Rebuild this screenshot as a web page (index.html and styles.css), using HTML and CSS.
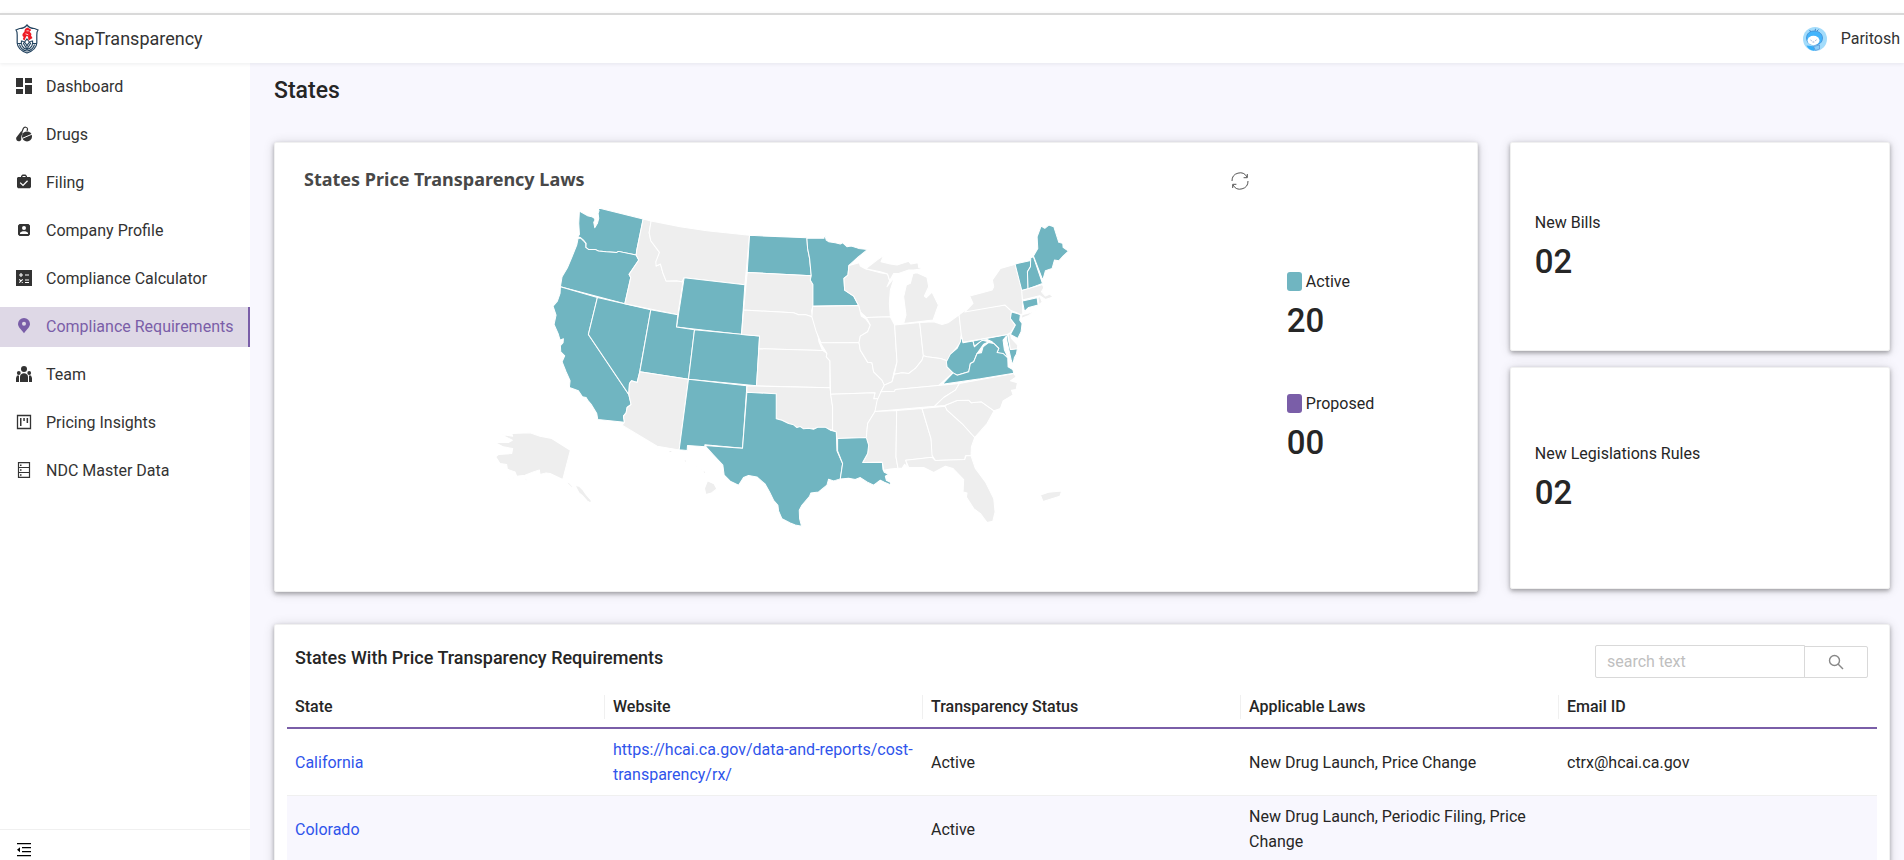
FILE: index.html
```html
<!DOCTYPE html>
<html lang="en">
<head>
<meta charset="utf-8">
<title>SnapTransparency - States</title>
<link rel="stylesheet" href="styles.css">
</head>
<body>
<div class="app">
  <header class="topbar">
    <svg class="logo" viewBox="0 0 24 30" aria-hidden="true">
      <path d="M12 1C10 3.400 7 4.600 4.500 4.500L1 6C2.500 8 2.500 9 2.200 11v8c.3 4 4 8 9.800 10 5.800-2 9.500-6 9.800-10v-8c-.3-2-.3-3 1.200-5l-3.500-1.500C17 4.600 14 3.400 12 1z" fill="#fff" stroke="#23435f" stroke-width="1.200"/>
      <path d="M2.500 19.500h4M21.500 19.500h-4M12 15l3.500 4.500L12 25l-3.500-5.500zM6.500 16.500c-1 4 1 8 5.500 9 4.500-1 6.500-5 5.500-9M4.500 20.500c1 4 4 6 7.500 6.500 3.500-.5 6.500-2.500 7.500-6.500M7 17c2 .5 4 2.500 5 5 1-2.500 3-4.500 5-5" fill="none" stroke="#23435f" stroke-width="1.100"/>
      <path d="M13 3.500c-2 .5-3.800 1.800-3.500 4L7.500 10v2l1.200 1-.9 2 1.700 1.500 1-2.500 1-2 1.500.5.500 4 2.500-1.500 1.500-1-1.500-2.500.5-1.500-2-2.500 1.500-1-.5-1.500-1.500-.5z" fill="#ee1c25"/>
      <path d="M11.500 6.800h2.300M10.500 9.800l2.800 1" stroke="#fff" stroke-width=".8"/>
    </svg>
    <span class="brand">SnapTransparency</span>
    <button class="user" type="button">
      <svg class="avatar" viewBox="0 0 24 24" aria-hidden="true">
        <circle cx="12" cy="12" r="12" fill="#a3dcfb"/>
        <path d="M3.500 18.500l9 1-1 4.200C8 24 5 22 3.500 18.500z" fill="#35aef8"/>
        <path d="M6.500 3l2 2.500M12.500 1.800l-.5 2.700M14 4l1.500-1.500" stroke="#3c7fc6" stroke-width=".9" fill="none"/>
        <path d="M11 4c5 0 8.500 3 8.500 7 0 4.500-3.500 7-8 7s-8-2.500-8-7 3.500-7 7.500-7z" fill="#43b4fb" stroke="#3c86cf" stroke-width=".7"/>
        <ellipse cx="10.500" cy="13.500" rx="6" ry="4.700" fill="#fff"/>
        <path d="M7.500 13l1.200.8M13.500 12.800l-1.200.9M9.500 15h1.800" stroke="#7b93c4" stroke-width=".8" fill="none"/>
        <path d="M10.500 19.500l6-1.500v4l-4 1.500z" fill="#8ccdf8" stroke="#5b93d6" stroke-width=".7"/>
      </svg>
      <span class="user-name">Paritosh</span>
    </button>
  </header>

  <div class="body">
    <aside class="sidebar">
      <nav class="menu">
        <a class="item" href="#"><svg viewBox="0 0 16 16"><path d="M0 0h7v9H0zM9 0h7v5H9zM0 11h7v5H0zM9 7h7v9H9z"/></svg>Dashboard</a>
        <a class="item" href="#"><svg viewBox="0 0 16 16"><path d="M5.500 7l1.800-4.500c1-2 4-1.500 4.200.3.100.8-.2 1.500-.5 2.200" fill="none" stroke="currentColor" stroke-width="1.200"/><path d="M5.300 5l1.500 2.500C5.500 9 5 11 5.300 13.500c-.3 1-1.300 1.800-2.600 1.800C.8 15.300-.3 13.500.3 11.500z"/><circle cx="11" cy="10.400" r="5"/><path d="M6.200 12.400l9.800-4.200" stroke="#fff" stroke-width="1"/></svg>Drugs</a>
        <a class="item" href="#"><svg viewBox="0 0 16 16"><path fill-rule="evenodd" d="M5 3V2l1.500-1.500h3L11 2v1h3l1 1v9l-1 1.200H2L1 13V4l1-1zM6.500 3h3V2h-3zM4.600 8.200l-.9.900L7 12.200l5-5-.9-.9L7 10.400z"/></svg>Filing</a>
        <a class="item" href="#"><svg viewBox="0 0 16 16"><path fill-rule="evenodd" d="M3.500 2h9L14 3.500v9L12.500 14h-9L2 12.500v-9zM8 4a2 2 0 100 4 2 2 0 000-4zM4 12h8v-1c-1-2.500-7-2.500-8 0z"/></svg>Company Profile</a>
        <a class="item" href="#"><svg viewBox="0 0 16 16"><path d="M0 0h16v16H0z"/><path d="M3 5h4M5 3v4M9 5h4M3.300 9.300l3.400 3.400M6.700 9.300l-3.400 3.400M9 10h4M9 12.500h4" stroke="#fff" stroke-width="1.100"/></svg>Compliance Calculator</a>
        <a class="item current" href="#" aria-current="page"><svg viewBox="0 0 16 16"><path fill-rule="evenodd" d="M8 0a6 6 0 00-6 6C2 9 5 11 8 15.300 11 11 14 9 14 6a6 6 0 00-6-6zm0 3.700a2 2 0 110 4 2 2 0 010-4z"/></svg>Compliance Requirements</a>
        <a class="item" href="#"><svg viewBox="0 0 16 16"><circle cx="8" cy="3" r="3"/><circle cx="2.800" cy="7" r="1.900"/><circle cx="13.200" cy="7" r="1.900"/><path d="M4 16v-5c0-5 8-5 8 0v5zM0 16v-4l1-2.500h2V16zM16 16v-4l-1-2.500h-2V16z"/></svg>Team</a>
        <a class="item" href="#"><svg viewBox="0 0 16 16"><path d="M1.500 1.500h13v13h-13z" fill="none" stroke="currentColor" stroke-width="1.300"/><path d="M4 4h1.500v8H4zM7.300 4h1.500v3H7.300zM10.600 4h1.500v5h-1.500z"/></svg>Pricing Insights</a>
        <a class="item" href="#"><svg viewBox="0 0 16 16"><path d="M2.500.600h11v14.800h-11zM2.500 5.500h11M2.500 10.500h11" fill="none" stroke="currentColor" stroke-width="1.200"/><path d="M4 2.500h1.500V4H4zM4 7.300h1.500v1.500H4zM4 12.200h1.500v1.500H4z"/></svg>NDC Master Data</a>
      </nav>
      <button class="collapse" type="button" aria-label="Collapse menu"><svg viewBox="0 0 16 16"><path d="M1 1h14v1.200H1zM6 5h9v1.200H6zM6 9h9v1.200H6zM1 13h14v1.200H1zM4 5.200v5L1 7.700z"/></svg></button>
    </aside>

    <main class="content">
      <h1 class="page-title">States</h1>
      <div class="overview">
        <section class="card laws">
          <div class="laws-head">
            <h2 class="laws-title">States Price Transparency Laws</h2>
            <button class="refresh" type="button" aria-label="Refresh"><svg viewBox="0 0 18 18"><path d="M1 9a8 8 0 0115-4M17 9A8 8 0 012 13M16.300 2v3.700h-3.700M1.700 16v-3.700h3.700"/></svg></button>
          </div>
          <div class="laws-body">
            <svg class="map" viewBox="0 0 1860 1020" role="img" aria-label="Map of the United States">
              <path class="st" d="M62 733L98 738 95 730 150 728 180 738 215 745 271 780 248 868 210 850 198 848 180 853 178 839 160 845 135 855 110 858 105 845 82 837 80 823 60 820 47 800 55 793 95 790 98 775 70 770 45 757 85 757 97 750z"/>
              <path class="st" d="M36 867L76 867 111 861 81 869zM128 868L140 865 142 870zM250 870L268 878 282 893 274 891 262 879zM285 886L297 888 309 900 319 914 333 930 333 939 321 932 307 916 297 908zM566 780L576 781 574 787 567 786zM612 808L620 811 618 817 612 814zM640 824L654 829 651 832zM655 832L667 838 664 841zM667 840L678 845 672 851zM682 872L702 881 710 896 694 908 677 913 673 894z"/>
              <path class="st on" d="M298 62L303 66 322 77 335 80 342 84 345 90 341 97 344 113 352 100 356 85 354 70 357 62 353 53 489 87 470 180 468 195 415 184 410 187 378 185 355 183 345 178 325 178 317 172 318 160 310 150 300 142 293 140 298 133 296 100z"/>
              <path class="st on" d="M294 145L303 145 311 153 317 160 317 172 325 178 345 178 355 183 378 185 410 187 415 184 468 195 476 210 447 253 452 262 434 341 241 290 246 260 262 233 274 205 290 165z"/>
              <path class="st on" d="M241 290L352 322 325 433 446 613 453 643 441 652 438 668 430 678 433 696 353 688 350 670 335 645 325 633 318 622 307 620 295 602 268 592 270 572 258 545 246 515 254 497 242 485 241 467 249 458 250 446 240 450 234 430 222 403 228 375 219 348 232 333 240 310z"/>
              <path class="st on" d="M352 322L512 359 478 548 471 577 454 572 448 580 446 613 325 433z"/>
              <path class="st" d="M489 87L513 93 507 128 512 152 538 187 528 228 541 222 548 248 558 273 590 272 605 275 610 265 593 374 434 341 452 262 447 253 476 210 468 195 470 180z"/>
              <path class="st" d="M513 93L600 110 680 122 808 136 794 284 612 263 605 275 590 272 558 273 548 248 541 222 528 228 527 215 538 187 512 152 507 128z"/>
              <path class="st on" d="M612 263L794 284 784 433 589 411z"/>
              <path class="st on" d="M512 359L593 374 589 411 643 419 625 567 479 545z"/>
              <path class="st on" d="M643 419L838 438 829 587 625 567z"/>
              <path class="st" d="M479 545L625 567 597 779 531 768 426 705 433 696 430 678 438 668 441 652 453 643 446 613 448 580 454 572 471 577z"/>
              <path class="st on" d="M625 567L800 587 787 774 674 764 676 770 622 766 621 781 597 779z"/>
              <path class="st on" d="M808 136L980 143 982 175 988 205 993 257 801 247z"/>
              <path class="st" d="M801 247L993 257 990 270 998 283 998 348 994 362 997 380 975 374 955 374 940 368 790 360z"/>
              <path class="st" d="M790 360L940 368 955 374 975 373 995 380 1008 405 1016 455 1027 481 836 476 838 438 784 433z"/>
              <path class="st" d="M836 476L1027 481 1040 490 1038 500 1049 512 1049 593 829 587z"/>
              <path class="st" d="M800 587L1049 593 1057 650 1057 720 1030 712 985 717 950 712 925 700 905 690 888 686 888 611 800 606z"/>
              <path class="st on" d="M800 606L888 611 888 686 905 690 925 700 940 704 950 712 960 709 970 716 985 714 1000 717 1012 711 1035 711 1050 720 1068 725 1070 782 1087 820 1080 866 1060 872 1045 867 1040 885 1015 905 992 908 988 918 965 945 957 960 958 985 964 1008 945 1004 930 998 905 985 895 962 893 945 880 930 868 905 855 882 830 860 805 856 790 862 775 885 750 873 732 855 728 825 700 795 674 766 787 774z"/>
              <g transform="translate(900 0)">
                <path class="st on" d="M80 145L131 145 133 132 138 150 145 155 165 158 180 162 187 158 200 170 213 168 235 175 262 178 235 200 206 226 203 255 191 265 193 300 220 318 235 346 98 348 98 283 90 270 93 257 88 205 82 175z"/>
                <path class="st" d="M206 226L237 218 240 228 255 236 300 248 322 252 328 272 320 290 342 262 330 300 327 340 330 380 258 382 240 365 235 346 220 318 193 300 191 265 203 255z"/>
                <path class="st" d="M256 236L290 210 310 196 302 215 330 222 350 225 385 214 392 222 413 218 415 232 432 235 400 240 385 240 355 250 340 250 328 272 322 252 300 245z"/>
                <path class="st" d="M398 250L410 248 440 262 445 290 432 318 438 323 455 306 474 345 468 362 458 390 370 400 377 375 370 320 378 285 390 280z"/>
                <path class="st" d="M97 349L235 346 243 378 256 386 270 405 262 425 240 438 236 460 122 458 108 425 95 380z"/>
                <path class="st" d="M120 458L236 457 240 480 262 516 275 518 280 545 305 570 312 585 302 605 295 625 280 626 284 608 151 612 149 512 138 500 140 490z"/>
                <path class="st" d="M151 612L284 608 280 626 295 625 284 664 262 700 258 742 170 745 168 725 157 720 157 650z"/>
                <path class="st" d="M258 382L330 380 343 405 350 515 340 550 335 575 312 585 305 570 280 545 275 518 262 516 240 480 236 457 240 438 262 425 270 405z"/>
                <path class="st" d="M343 405L418 397 429 497 425 510 405 535 385 550 365 548 342 552 350 515z"/>
                <path class="st" d="M418 397L460 395 485 403 505 397 536 374 543 430 540 458 515 490 500 512 480 505 440 500 429 497z"/>
                <path class="st" d="M302 605L343 603 345 598 475 586 518 548 500 530 500 512 480 505 440 500 429 497 425 510 405 535 385 550 365 548 342 552 335 575 312 585z"/>
                <path class="st" d="M302 605L343 603 345 598 537 580 525 600 490 622 463 648 284 664 290 632z"/>
                <path class="st" d="M284 664L349 661 347 800 353 834 330 836 310 840 306 816 247 817 262 790 265 765 258 742 262 700z"/>
                <path class="st" d="M349 661L425 655 452 745 458 801 376 810 382 832 373 822 366 833 353 834 347 800z"/>
                <path class="st" d="M425 655L495 648 500 660 545 700 583 742 573 770 572 797 555 797 553 808 465 811 455 795 452 745z"/>
                <path class="st" d="M376 810L455 801 465 811 553 808 557 797 572 797 585 835 615 875 640 925 644 965 637 993 620 997 600 970 580 955 558 920 560 908 548 905 550 868 518 835 495 828 460 847 430 832 385 832z"/>
                <path class="st" d="M493 646L530 631 565 630 573 638 603 635 641 662 620 700 583 742 545 700 500 660z"/>
                <path class="st" d="M537 580L700 550 707 560 690 572 711 578 707 598 693 600 698 614 668 632 660 655 641 662 603 635 573 638 565 630 530 631 493 646 463 648 490 622 525 600z"/>
                <path class="st on" d="M172 745L258 742 265 765 262 790 247 817 306 816 308 838 312 846 325 852 315 858 318 870 330 876 332 884 312 876 300 870 280 885 260 875 240 862 225 868 205 864 180 866 187 820 172 782z"/>
                <path class="st on" d="M543 436L548 458 578 453 582 470 603 450 625 455 610 462 590 490 580 515 570 520 565 545 530 555 518 548 500 530 498 515 510 492 530 475 540 455z"/>
                <path class="st on" d="M578 453L681 433 690 478 711 475 708 492 702 502 697 524 692 508 680 455 678 438 668 450 672 480 682 500 650 487 655 475 635 455 620 448 603 452 582 468z"/>
                <path class="st on" d="M486 582L518 548 530 555 565 545 570 520 580 515 590 490 603 488 608 470 625 457 640 460 655 475 650 487 668 490 682 503 683 530 697 538 700 549 600 566z"/>
                <path class="st" d="M683 433L690 430 693 445 712 465 711 476 690 478z"/>
                <path class="st" d="M536 374L552 362 674 345 690 360 693 366 690 385 705 405 690 428 681 433 548 456 543 436z"/>
                <path class="st on" d="M693 366L720 373 718 390 725 400 722 425 712 445 690 433 705 405 690 385z"/>
                <path class="st" d="M553 366L578 340 568 318 605 308 635 300 640 290 636 270 660 235 704 223 725 300 727 372 720 373 690 360 674 345z"/>
                <path class="st" d="M722 385L725 374 748 368 768 358 745 376z"/>
                <path class="st on" d="M704 222L751 211 750 230 741 245 743 297 724 301z"/>
                <path class="st on" d="M751 203L759 200 782 268 786 280 743 297 741 245 750 230z"/>
                <path class="st on" d="M759 198L772 175 770 140 782 108 793 115 805 105 820 110 835 157 847 160 848 172 864 183 848 198 835 212 822 210 815 235 795 242 787 270z"/>
                <path class="st" d="M724 301L786 283 790 293 783 305 795 318 808 312 818 321 795 328 778 317 726 330z"/>
                <path class="st on" d="M726 333L770 323 773 345 745 352 732 364z"/>
                <path class="st" d="M772 322L779 320 785 335 776 344z"/>
                <path class="st" d="M780 914L804 906 844 902 838 918 788 934z"/>
              </g>
            </svg>
            <dl class="legend">
              <div class="stat"><dt><i class="swatch active"></i>Active</dt><dd>20</dd></div>
              <div class="stat"><dt><i class="swatch proposed"></i>Proposed</dt><dd>00</dd></div>
            </dl>
          </div>
        </section>
        <div class="side">
          <dl class="card figure bills"><dt>New Bills</dt><dd>02</dd></dl>
          <dl class="card figure rules"><dt>New Legislations Rules</dt><dd>02</dd></dl>
        </div>
      </div>

      <section class="card listing">
        <div class="listing-head">
          <h2 class="listing-title">States With Price Transparency Requirements</h2>
          <form class="search">
            <input type="text" placeholder="search text" aria-label="search text">
            <button type="button" aria-label="Search"><svg viewBox="0 0 16 16"><circle cx="6.500" cy="6.500" r="5"/><path d="M10 10l5 5"/></svg></button>
          </form>
        </div>
        <table class="grid">
          <thead>
            <tr><th><span>State</span></th><th><span>Website</span></th><th><span>Transparency Status</span></th><th><span>Applicable Laws</span></th><th><span>Email ID</span></th></tr>
          </thead>
          <tbody>
            <tr><td><a href="#">California</a></td><td><a href="#">https://hcai.ca.gov/data-and-reports/cost-transparency/rx/</a></td><td>Active</td><td>New Drug Launch, Price Change</td><td>ctrx@hcai.ca.gov</td></tr>
            <tr><td><a href="#">Colorado</a></td><td></td><td>Active</td><td>New Drug Launch, Periodic Filing, Price Change</td><td></td></tr>
          </tbody>
        </table>
      </section>
    </main>
  </div>
</div>
</body>
</html>
```
FILE: styles.css
```css
*, *::before, *::after { box-sizing: border-box; }
body {
  margin: 0;
  font-family: Roboto, "Liberation Sans", sans-serif;
  font-size: 16px;
  line-height: 25px;
  color: #262626;
  background: #fff;
}
h1, h2, dl, dd { margin: 0; }
a { color: #2f54eb; text-decoration: none; }
button { font: inherit; color: inherit; background: none; border: 0; padding: 0; cursor: pointer; }

.app { height: 100vh; padding-top: 13px; display: flex; flex-direction: column; overflow: hidden; }

.topbar {
  flex: none;
  height: 50px;
  border-top: 2px solid #d9d9d9;
  padding: 0 4px 0 15px;
  display: flex;
  align-items: center;
  background: #fff;
  box-shadow: 0 1px 4px rgba(0, 21, 41, .08);
  z-index: 1;
}
.logo { width: 24px; height: 30px; }
.brand { margin-left: 15px; padding-bottom: 2px; font-size: 18px; color: #333; }
.user { margin-left: auto; display: flex; align-items: center; gap: 14px; color: #333; }
.user-name { padding-bottom: 2px; }
.avatar { width: 24px; height: 24px; }

.body { flex: 1; min-height: 0; display: flex; }
.sidebar { flex: none; width: 250px; display: flex; flex-direction: column; background: #fff; }
.menu { flex: 1; padding-top: 4px; display: flex; flex-direction: column; gap: 8px; }
.item { height: 40px; padding: 0 0 2px 16px; display: flex; align-items: center; gap: 14px; color: #333; }
.item svg { width: 16px; height: 16px; fill: currentColor; }
.item.current { color: #7a5ea8; background: #ded8e6; border-right: 2px solid #7a5ea8; }
.collapse { height: 31px; border-top: 1px solid #f0f0f0; padding: 12px 16px 0; display: flex; }
.collapse svg { width: 16px; height: 16px; }

.content { flex: 1; min-width: 0; padding: 0 14px 0 24px; background: #f8f7fe; overflow: hidden; }
.page-title { padding: 12px 0 35px; font-size: 23px; line-height: 32px; font-weight: 500; }
.card {
  background: #fff;
  border: 1px solid #f0f0f0;
  border-radius: 2px;
  box-shadow: 0 2px 4px rgba(0, 0, 0, .3), 0 1px 12px rgba(0, 0, 0, .14);
}

.overview { display: grid; grid-template-columns: 19fr 6fr; gap: 32px; align-items: start; }
.laws { padding: 25px 28px 61px 29px; }
.laws-head { display: flex; align-items: flex-end; justify-content: space-between; }
.laws-title { font-family: "Noto Sans", "Open Sans", sans-serif; font-size: 18px; line-height: 22px; font-weight: 700; color: #484848; }
.refresh { flex: none; width: 18px; height: 18px; margin-right: 200px; }
.refresh svg { display: block; fill: none; stroke: #555; stroke-width: 1; }
.laws-body { display: flex; justify-content: space-between; }
.map { flex: none; width: 54.2%; margin-left: 176px; }
.st { fill: #eee; stroke: #fff; stroke-width: 3; stroke-linejoin: round; }
.on { fill: #70b5c1; }
.legend { width: 162px; padding-top: 79px; display: flex; flex-direction: column; gap: 57px; }
.stat { display: flex; flex-direction: column; gap: 14px; }
.stat dt { display: flex; align-items: center; gap: 4px; }
.swatch { width: 15px; height: 19px; border-radius: 3px; }
.active { background: #70b5c1; }
.proposed { background: #7a5ea8; }
.stat dd, .figure dd { font-size: 33px; line-height: 26px; font-weight: 500; }

.side { display: grid; gap: 16px; }
.figure { padding: 67px 24px; display: flex; flex-direction: column; gap: 14px; }
.bills { padding-bottom: 75px; }
.rules { padding: 73px 24px 82px; }

.listing { margin-top: 32px; padding: 20px 12px; }
.listing-head { display: flex; justify-content: space-between; padding: 0 9px 0 8px; }
.listing-title { font-size: 18px; line-height: 26px; font-weight: 500; }
.search { display: flex; align-items: flex-end; }
.search input { width: 210px; height: 33px; padding: 0 11px; font: inherit; border: 1px solid #d9d9d9; border-radius: 2px 0 0 2px; }
.search input::placeholder { color: #bfbfbf; }
.search button { width: 64px; height: 32px; margin-left: -1px; border: 1px solid #d9d9d9; border-radius: 0 2px 2px 0; display: grid; place-items: center; }
.search svg { width: 16px; height: 16px; fill: none; stroke: #888; stroke-width: 1.4; }

.grid { width: 100%; border-collapse: separate; border-spacing: 0; table-layout: fixed; }
.grid th { padding: 17px 0 8px; text-align: left; font-weight: 500; border-bottom: 2px solid #7a5ea8; }
.grid th span { display: block; padding: 0 8px; line-height: 24px; border-right: 1px solid #f0f0f0; }
.grid th:last-child span { border-right: 0; }
.grid td { padding: 8px; border-bottom: 1px solid #f0f0f0; overflow-wrap: break-word; }
.grid tr:nth-child(even) td { background: #f8f7fe; }
```
